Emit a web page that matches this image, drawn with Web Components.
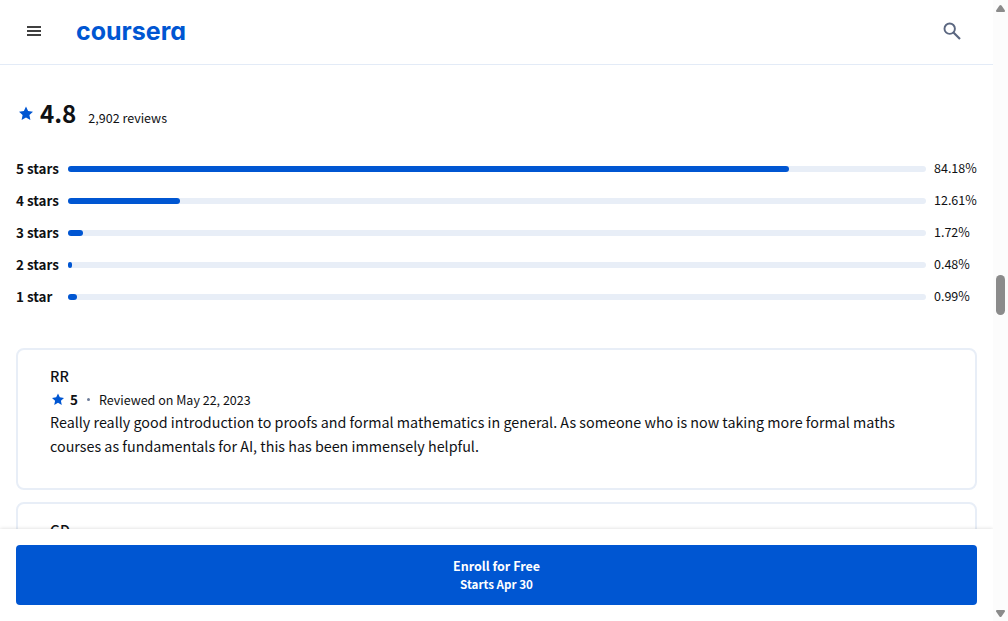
<!DOCTYPE html>
<html lang="en">
<head>
<meta charset="utf-8">
<meta name="viewport" content="width=device-width, initial-scale=1">
<title>Course reviews | Coursera</title>
<style>
  body { margin: 0; background: #fff; color: #0f1114; font-family: "Source Sans Pro", "Noto Sans CJK SC", "Open Sans", sans-serif; font-size-adjust: 0.486; }
</style>
</head>
<body>
<course-page></course-page>
<script>
const define = (name, html, setup) => {
  const template = document.createElement('template');
  template.innerHTML = html;
  customElements.define(name, class extends HTMLElement {
    constructor() {
      super();
      this.attachShadow({ mode: 'open' }).append(template.content.cloneNode(true));
    }
    connectedCallback() { if (setup) setup(this, this.shadowRoot); }
  });
};

define('star-icon', `
  <style>:host { display: block; flex: none; width: 14px; height: 14px; color: #0056d2; } svg { display: block; width: 100%; height: 100%; }</style>
  <svg viewBox="0 0 14 14" aria-hidden="true"><path fill="currentColor" d="M7 .6 9.1 5 14 5.700 10.400 9 11.400 13.900 7 11.500 2.600 13.900 3.600 9 0 5.700 4.900 5Z"/></svg>`);

define('site-header', `
  <style>
    :host { display: flex; align-items: center; height: 62px; padding: 0 25px 2px 19px; border-bottom: 1px solid #e3ebf7; background: #fff; }
    button { display: grid; place-items: center; width: 32px; height: 32px; margin: 0; padding: 0; border: 0; background: none; color: #1f1f1f; }
    .menu { width: 30px; }
    .search { margin-left: auto; color: #5b6780; }
    svg { display: block; }
    a { margin-left: 27px; color: #0056d2; font: 700 25px/32px Inter, sans-serif; font-size-adjust: none; font-feature-settings: "cv11"; text-decoration: none; }
  </style>
  <button class="menu" aria-label="Menu"><svg width="14" height="10" viewBox="0 0 14 10" fill="currentColor"><path d="M0 0h14v2H0zM0 4h14v2H0zM0 8h14v2H0z" fill-opacity=".85"/></svg></button>
  <a href="#" aria-label="Coursera">coursera</a>
  <button class="search" aria-label="Search"><svg width="18" height="18" viewBox="0 0 18 18" fill="none" stroke="currentColor"><circle cx="6.700" cy="6.700" r="5.200" stroke-width="1.900"/><path d="m10.500 10.500 6.500 6.500" stroke-width="2.200"/></svg></button>`);

define('rating-summary', `
  <style>
    :host { display: flex; align-items: baseline; height: 32px; padding-left: 3px; }
    star-icon { align-self: center; margin-right: 7px; }
    strong { font-size: 27px; line-height: 32px; font-weight: 700; }
    span { margin-left: 12px; font-size: 14px; line-height: 20px; }
  </style>
  <star-icon></star-icon><strong><slot name="score"></slot></strong><span><slot></slot></span>`);

define('rating-row', `
  <style>
    :host { display: grid; grid-template-columns: 44px 1fr 43px; column-gap: 8px; align-items: center; height: 24px; }
    .label { padding-bottom: 2px; font-size: 15px; line-height: 22px; font-weight: 700; white-space: nowrap; }
    .track { height: 6px; border-radius: 3px; background: #e8eef7; }
    .fill { height: 100%; border-radius: 3px; background: #0056d2; }
    .value { padding-bottom: 2px; font-size: 14px; line-height: 20px; white-space: nowrap; }
  </style>
  <span class="label"><slot></slot></span>
  <div class="track"><div class="fill"></div></div>
  <span class="value"></span>`,
  (host, root) => {
    root.querySelector('.fill').style.width = host.getAttribute('fill') + '%';
    root.querySelector('.value').textContent = host.getAttribute('value') + '%';
  });

define('review-card', `
  <style>
    :host { display: block; padding: 14px 32px 30px; border: 2px solid #e8eef7; border-radius: 8px; background: #fff; }
    h3 { margin: 0; font-size: 16px; line-height: 24px; font-weight: 500; }
    .meta { display: flex; align-items: center; height: 22px; font-size: 14px; }
    star-icon { width: 12px; height: 12px; margin: 0 6px 0 2px; }
    .score { font-size: 15px; font-weight: 700; }
    .dot { width: 3px; height: 3px; margin: 0 9px; border-radius: 50%; background: #6d7c99; }
    p { margin: 0; font-size: 16px; line-height: 24px; }
  </style>
  <h3><slot name="author"></slot></h3>
  <div class="meta"><star-icon></star-icon><span class="score"><slot name="score"></slot></span><span class="dot"></span><span><slot name="date"></slot></span></div>
  <p><slot></slot></p>`);

define('enroll-bar', `
  <style>
    :host { position: relative; display: block; padding: 16px; background: #fff; box-shadow: 0 0 4px rgba(0, 0, 0, .16); }
    button { display: flex; flex-direction: column; align-items: center; justify-content: center; width: 100%; height: 60px; margin: 0; padding: 0; border: 0; border-radius: 4px; background: #0056d2; color: #fff; font-family: inherit; font-size-adjust: inherit; font-weight: 700; }
    .main { font-size: 14px; line-height: 18px; }
    .sub { font-size: 13px; line-height: 18px; }
  </style>
  <button><span class="main"><slot></slot></span><span class="sub"><slot name="date"></slot></span></button>`);

define('scroll-rail', `
  <style>
    :host { position: relative; display: grid; grid-template-rows: 7px 263fr 40px 294fr 7px; justify-items: center; box-sizing: border-box; padding: 5px 0 4px; background: #fcfcfc; }
    svg { display: block; }
    .thumb { grid-row: 3; width: 9px; border-radius: 5px; background: #8b8b8b; }
    .down { grid-row: 5; }
  </style>
  <svg width="9" height="7" viewBox="0 0 9 7" fill="#8b8b8b"><path d="M3.500.600Q4.500-.600 5.500.600L8.800 5.200Q9.400 7 8 7H1Q-.400 7 .200 5.200Z"/></svg>
  <div class="thumb"></div>
  <svg class="down" width="9" height="7" viewBox="0 0 9 7" fill="#8b8b8b"><path d="M3.500 6.400Q4.500 7.600 5.500 6.400L8.800 1.800Q9.400 0 8 0H1Q-.400 0 .200 1.800Z"/></svg>`);

define('course-page', `
  <style>
    :host { display: grid; grid-template-columns: minmax(0, 1fr) 15px; height: 100vh; overflow: hidden; }
    .view { display: flex; flex-direction: column; min-height: 0; }
    main { flex: 1; min-height: 0; overflow: hidden; padding: 32px 16px 0; }
    .bars { display: grid; row-gap: 8px; margin-top: 28px; }
    .reviews { display: grid; row-gap: 12px; margin-top: 39px; }
    enroll-bar { flex: none; }
    site-header { flex: none; }
  </style>
  <div class="view">
    <site-header></site-header>
    <main>
      <rating-summary><span slot="score">4.8</span>2,902 reviews</rating-summary>
      <section class="bars" aria-label="Rating breakdown">
        <rating-row fill="84" value="84.18">5 stars</rating-row>
        <rating-row fill="13" value="12.61">4 stars</rating-row>
        <rating-row fill="1.8" value="1.72">3 stars</rating-row>
        <rating-row fill="0.5" value="0.48">2 stars</rating-row>
        <rating-row fill="1" value="0.99">1 star</rating-row>
      </section>
      <section class="reviews" aria-label="Reviews">
        <review-card><span slot="author">RR</span><span slot="score">5</span><span slot="date">Reviewed on May 22, 2023</span>Really really good introduction to proofs and formal mathematics in general. As someone who is now taking more formal maths courses as fundamentals for AI, this has been immensely helpful.</review-card>
        <review-card><span slot="author">GD</span></review-card>
      </section>
    </main>
    <enroll-bar>Enroll for Free<span slot="date">Starts Apr 30</span></enroll-bar>
  </div>
  <scroll-rail aria-hidden="true"></scroll-rail>`);
</script>
</body>
</html>
